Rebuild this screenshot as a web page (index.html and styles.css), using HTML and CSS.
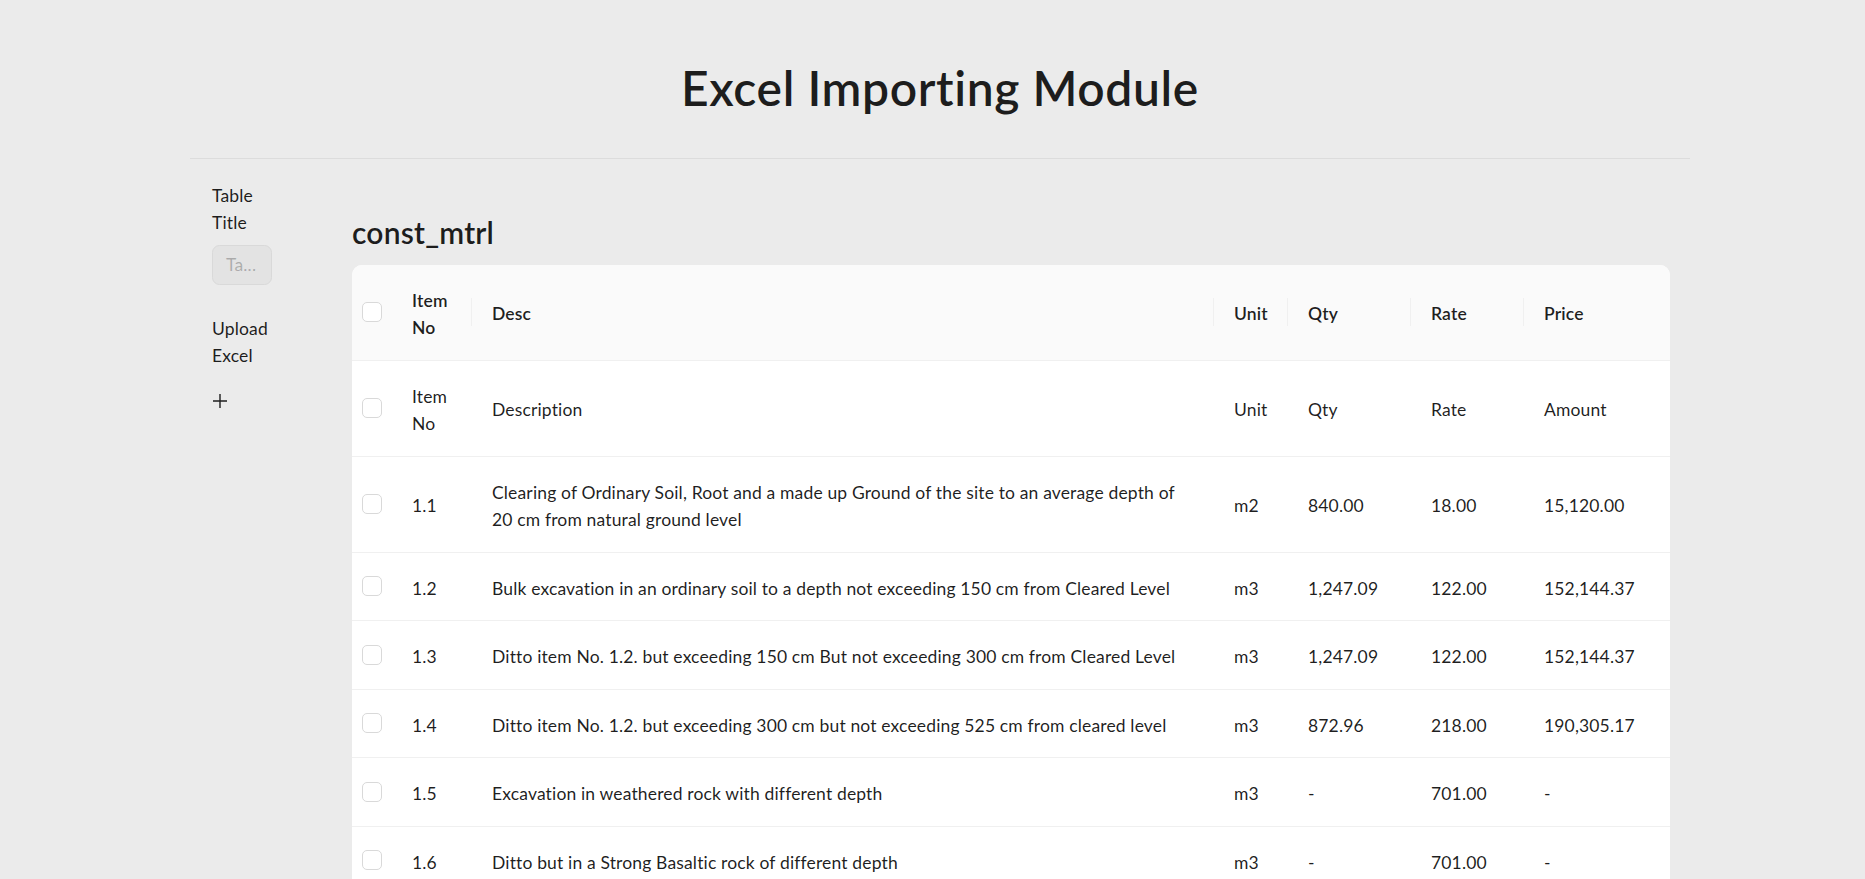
FILE: index.html
```html
<!DOCTYPE html>
<html lang="en">
<head>
<meta charset="utf-8">
<title>Excel Importing Module</title>
<link rel="stylesheet" href="styles.css">
</head>
<body>
<div class="page">
  <header class="top">
    <h1 class="title">Excel Importing Module</h1>
  </header>
  <div class="main">
    <aside class="side">
      <div class="field">
        <label class="label">Table Title</label>
        <div class="input"><span class="ph">Ta...</span></div>
      </div>
      <div class="field upload">
        <label class="label">Upload Excel</label>
        <div class="plus">
          <svg width="14" height="14" viewBox="0 0 14 14" aria-hidden="true"><path d="M7 0v14M0 7h14" stroke="#1f1f1f" stroke-width="1.4" fill="none"/></svg>
        </div>
      </div>
    </aside>
    <section class="content">
      <h3 class="tname">const_mtrl</h3>
      <div class="card">
        <table class="grid">
          <colgroup>
            <col class="c-sel"><col class="c-item"><col class="c-desc"><col class="c-unit"><col class="c-qty"><col class="c-rate"><col class="c-price">
          </colgroup>
          <thead>
            <tr>
              <th class="sel"><span class="cb"></span></th>
              <th class="sep">Item No</th>
              <th class="sep">Desc</th>
              <th class="sep">Unit</th>
              <th class="sep">Qty</th>
              <th class="sep">Rate</th>
              <th>Price</th>
            </tr>
          </thead>
          <tbody>
            <tr>
              <td class="sel"><span class="cb"></span></td>
              <td>Item No</td>
              <td>Description</td>
              <td>Unit</td>
              <td>Qty</td>
              <td>Rate</td>
              <td>Amount</td>
            </tr>
            <tr>
              <td class="sel"><span class="cb"></span></td>
              <td>1.1</td>
              <td>Clearing of Ordinary Soil, Root and a made up Ground of the site to an average depth of 20 cm from natural ground level</td>
              <td>m2</td>
              <td>840.00</td>
              <td>18.00</td>
              <td>15,120.00</td>
            </tr>
            <tr>
              <td class="sel"><span class="cb"></span></td>
              <td>1.2</td>
              <td>Bulk excavation in an ordinary soil to a depth not exceeding 150 cm from Cleared Level</td>
              <td>m3</td>
              <td>1,247.09</td>
              <td>122.00</td>
              <td>152,144.37</td>
            </tr>
            <tr>
              <td class="sel"><span class="cb"></span></td>
              <td>1.3</td>
              <td>Ditto item No. 1.2. but exceeding 150 cm But not exceeding 300 cm from Cleared Level</td>
              <td>m3</td>
              <td>1,247.09</td>
              <td>122.00</td>
              <td>152,144.37</td>
            </tr>
            <tr>
              <td class="sel"><span class="cb"></span></td>
              <td>1.4</td>
              <td>Ditto item No. 1.2. but exceeding 300 cm but not exceeding 525 cm from cleared level</td>
              <td>m3</td>
              <td>872.96</td>
              <td>218.00</td>
              <td>190,305.17</td>
            </tr>
            <tr>
              <td class="sel"><span class="cb"></span></td>
              <td>1.5</td>
              <td>Excavation in weathered rock with different depth</td>
              <td>m3</td>
              <td>-</td>
              <td>701.00</td>
              <td>-</td>
            </tr>
            <tr>
              <td class="sel"><span class="cb"></span></td>
              <td>1.6</td>
              <td>Ditto but in a Strong Basaltic rock of different depth</td>
              <td>m3</td>
              <td>-</td>
              <td>701.00</td>
              <td>-</td>
            </tr>
          </tbody>
        </table>
      </div>
    </section>
  </div>
</div>
</body>
</html>
```
FILE: styles.css
```css
html {
  scrollbar-width: none;
}
body {
  margin: 0;
  background: #ebebeb;
  color: rgba(0, 0, 0, 0.88);
  font-family: "Lato", "Open Sans", "Liberation Sans", sans-serif;
  font-size: 17.5px;
  line-height: 27.5px;
  letter-spacing: 0.15px;
}
.page {
  width: 1500px;
  margin-left: 190px;
}
.top {
  padding: 59px 0 41px;
  border-bottom: 1px solid #dcdcdc;
  text-align: center;
}
.title {
  margin: 0;
  font-size: 48px;
  line-height: 57.5px;
  font-weight: 600;
  letter-spacing: 0.6px;
  color: rgba(0, 0, 0, 0.88);
}
.main {
  display: flex;
}
.side {
  width: 60px;
  padding: 23px 60px 0 22px;
  display: flex;
  flex-direction: column;
  gap: 30px;
}
.field {
  display: flex;
  flex-direction: column;
}
.label {
  display: block;
}
.input {
  margin-top: 8px;
  height: 38px;
  border: 1px solid #d9d9d9;
  border-radius: 7.5px;
  background: #e3e3e3;
  padding: 0 13px;
  display: flex;
  align-items: center;
}
.ph {
  color: rgba(0, 0, 0, 0.25);
}
.plus {
  margin-top: 24px;
  padding-left: 1px;
  height: 14px;
  display: flex;
}
.content {
  flex: 1;
  padding: 53px 20px 0 20px;
}
.tname {
  margin: 0 0 13px;
  font-size: 30px;
  line-height: 40px;
  font-weight: 600;
  letter-spacing: 0.2px;
}
.card {
  background: #fff;
  border-radius: 10px;
}
.grid {
  width: 1318px;
  table-layout: fixed;
  border-collapse: separate;
  border-spacing: 0;
}
.c-sel { width: 40px; }
.c-item { width: 80px; }
.c-desc { width: 742px; }
.c-unit { width: 74px; }
.c-qty { width: 123px; }
.c-rate { width: 113px; }
.c-price { width: 146px; }
.grid th,
.grid td {
  padding: 22px 20px 18px;
  text-align: left;
  vertical-align: middle;
  border-bottom: 1px solid #f0f0f0;
}
.grid th {
  background: #fafafa;
  font-weight: 600;
  position: relative;
}
.grid th:first-child {
  border-top-left-radius: 10px;
}
.grid th:last-child {
  border-top-right-radius: 10px;
}
.grid th.sep::before {
  content: "";
  position: absolute;
  right: 0;
  top: 50%;
  width: 1px;
  height: 28px;
  margin-top: -14px;
  background: #f0f0f0;
}
.grid .sel {
  padding: 20px 10px;
}
.cb {
  display: block;
  width: 20px;
  height: 20px;
  box-sizing: border-box;
  border: 1px solid #d9d9d9;
  border-radius: 5px;
  background: #fff;
}
```
